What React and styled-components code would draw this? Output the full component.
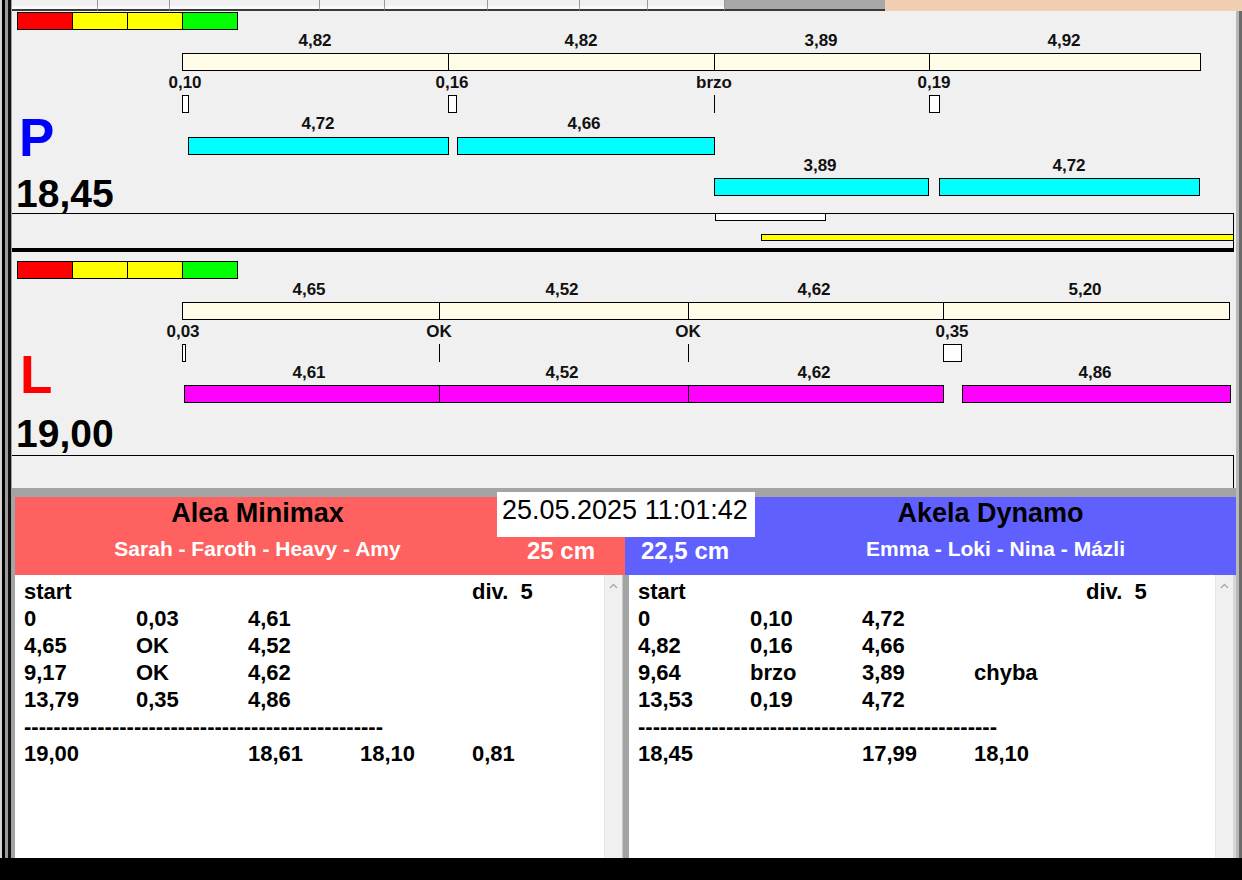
import styled, { createGlobalStyle } from "styled-components";

const GlobalStyle = createGlobalStyle`
  html, body {
    margin: 0;
    padding: 0;
    background: #000;
  }
  body {
    font-family: "Liberation Sans", Arial, sans-serif;
  }
`;

const FONT = `"Liberation Sans", Arial, sans-serif`;

// chart rows, x in px from the start of the chart column
const panels = {
  P: {
    letter: "P",
    color: "#0000ff",
    score: "18,45",
    legendGap: 1,
    letterLeft: 7,
    letterGap: 11,
    scoreGap: 0,
    footer: 35,
    rows: [
      { kind: "labels", h: 23, top: 2, items: [[133, "4,82"], [399, "4,82"], [639, "3,89"], [882, "4,92"]] },
      { kind: "bar", h: 18, color: "#fffce8", segs: [[0, 266], [266, 532], [532, 747], [747, 1018]] },
      { kind: "labels", h: 24, top: 3, items: [[3, "0,10"], [270, "0,16"], [532, "brzo"], [752, "0,19"]] },
      { kind: "bar", h: 18, color: "#ffffff", segs: [[0, 6], [266, 274], [532, 532], [747, 757]] },
      { kind: "labels", h: 24, top: 2, items: [[136, "4,72"], [402, "4,66"]] },
      { kind: "bar", h: 18, color: "#00ffff", segs: [[6, 266], [275, 532]] },
      { kind: "labels", h: 23, top: 2, items: [[638, "3,89"], [887, "4,72"]] },
      { kind: "bar", h: 18, color: "#00ffff", segs: [[532, 746], [757, 1017]] },
      { kind: "space", h: 17 },
    ],
  },
  L: {
    letter: "L",
    color: "#ff0000",
    score: "19,00",
    legendGap: 9,
    letterLeft: 8,
    letterGap: 14,
    scoreGap: 2,
    footer: 33,
    rows: [
      { kind: "labels", h: 23, top: 2, items: [[127, "4,65"], [380, "4,52"], [632, "4,62"], [903, "5,20"]] },
      { kind: "bar", h: 18, color: "#fffce8", segs: [[0, 257], [257, 506], [506, 761], [761, 1047]] },
      { kind: "labels", h: 24, top: 3, items: [[1, "0,03"], [257, "OK"], [506, "OK"], [770, "0,35"]] },
      { kind: "bar", h: 18, color: "#ffffff", segs: [[0, 3], [257, 257], [506, 506], [761, 779]] },
      { kind: "labels", h: 23, top: 2, items: [[127, "4,61"], [380, "4,52"], [632, "4,62"], [913, "4,86"]] },
      { kind: "bar", h: 18, color: "#ff00ff", segs: [[2, 257], [257, 506], [506, 761], [780, 1048]] },
      { kind: "space", h: 52 },
    ],
  },
};

const dashes = "-".repeat(49);

const teams = [
  {
    name: "Alea Minimax",
    dogs: "Sarah - Faroth - Heavy - Amy",
    height: "25 cm",
    color: "#ff6060",
    rows: [
      ["start", "", "", "", "div.\u00a0\u00a05"],
      ["0", "0,03", "4,61"],
      ["4,65", "OK", "4,52"],
      ["9,17", "OK", "4,62"],
      ["13,79", "0,35", "4,86"],
      [dashes],
      ["19,00", "", "18,61", "18,10", "0,81"],
    ],
  },
  {
    name: "Akela Dynamo",
    dogs: "Emma - Loki - Nina - Mázli",
    height: "22,5 cm",
    color: "#6060ff",
    rows: [
      ["start", "", "", "", "div.\u00a0\u00a05"],
      ["0", "0,10", "4,72"],
      ["4,82", "0,16", "4,66"],
      ["9,64", "brzo", "3,89", "chyba"],
      ["13,53", "0,19", "4,72"],
      [dashes],
      ["18,45", "", "17,99", "18,10"],
    ],
  },
];

const tabs = [86, 72, 150, 65, 103, 92, 68, 77];

function Legend({ gap }) {
  return (
    <LegendRow $gap={gap}>
      {["#ff0000", "#ffff00", "#ffff00", "#00ff00"].map((c, i) => (
        <LegendBox key={i} $color={c} />
      ))}
    </LegendRow>
  );
}

function ChartRow({ row }) {
  if (row.kind === "labels") {
    return (
      <Track $h={row.h}>
        {row.items.map(([x, t], i) => (
          <Label key={i} $top={row.top} style={{ left: x }}>
            {t}
          </Label>
        ))}
      </Track>
    );
  }
  if (row.kind === "bar") {
    return (
      <Track $h={row.h}>
        {row.segs.map(([a, b], i) =>
          a === b ? (
            <Tick key={i} style={{ left: a }} />
          ) : (
            <Seg key={i} $color={row.color} style={{ left: a, width: b - a + 1 }} />
          )
        )}
      </Track>
    );
  }
  return <Track $h={row.h} />;
}

function Lane({ data, children }) {
  return (
    <LanePanel>
      <Legend gap={data.legendGap} />
      <LaneBody>
        <Side>
          <Letter $color={data.color} $left={data.letterLeft} $gap={data.letterGap}>
            {data.letter}
          </Letter>
          <Score $gap={data.scoreGap}>{data.score}</Score>
        </Side>
        <Chart>
          {data.rows.map((r, i) => (
            <ChartRow key={i} row={r} />
          ))}
        </Chart>
      </LaneBody>
      <LaneFooter $h={data.footer}>{children}</LaneFooter>
    </LanePanel>
  );
}

function TeamHeader({ team, flip }) {
  return (
    <Header $color={team.color} $flip={flip}>
      <TeamName $flip={flip} $shift={flip ? 10 : 0}>{team.name}</TeamName>
      <Dogs $flip={flip}>{team.dogs}</Dogs>
      <Height $flip={flip}>{team.height}</Height>
    </Header>
  );
}

function ResultList({ team, edge }) {
  return (
    <ListFrame $edge={edge}>
      <ListBody>
        {team.rows.map((r, i) =>
          r.length === 1 ? (
            <ListRow key={i}>
              <Dashes>{r[0]}</Dashes>
            </ListRow>
          ) : (
            <ListRow key={i}>
              {[0, 1, 2, 3, 4].map((c) => (
                <Cell key={c}>{r[c] || ""}</Cell>
              ))}
            </ListRow>
          )
        )}
      </ListBody>
      <ScrollTrack>
        <svg width="9" height="6" viewBox="0 0 9 6">
          <path d="M1 5 L4.5 1.5 L8 5" fill="none" stroke="#a8a8a8" strokeWidth="1.3" />
        </svg>
      </ScrollTrack>
    </ListFrame>
  );
}

export default function App() {
  return (
    <>
      <GlobalStyle />
      <Page>
        <Window>
          <LeftFrame />
          <Column>
            <TabStrip>
              {tabs.map((w, i) => (
                <Tab key={i} $w={w} />
              ))}
              <TabGray />
              <TabPeach />
            </TabStrip>
            <Inner>
              <Content>
                <Lane data={panels.P}>
                  <StartMark />
                  <TimeBar />
                </Lane>
                <Divider />
                <Lane data={panels.L} />
                <GrayBand />
                <Results>
                  <DateBox>25.05.2025 11:01:42</DateBox>
                  <Headers>
                    <TeamHeader team={teams[0]} />
                    <TeamHeader team={teams[1]} flip />
                  </Headers>
                  <Lists>
                    <ResultList team={teams[0]} />
                    <ListDivider />
                    <ResultList team={teams[1]} edge />
                  </Lists>
                </Results>
              </Content>
              <RightFrame />
            </Inner>
          </Column>
        </Window>
        <BottomBar />
      </Page>
    </>
  );
}

const Page = styled.div`
  width: 1242px;
  height: 880px;
  display: flex;
  flex-direction: column;
  overflow: hidden;
  background: #f0f0f0;
  font-family: ${FONT};
`;

const Window = styled.div`
  display: flex;
  height: 858px;
`;

const LeftFrame = styled.div`
  width: 12px;
  flex-shrink: 0;
  background: linear-gradient(
    90deg,
    #d4d4d4 0 2px,
    #000 2px 5px,
    #9c9c9c 5px 8px,
    #111 8px 11px,
    #a0a0a0 11px 12px
  );
`;

const Column = styled.div`
  flex: 1;
  display: flex;
  flex-direction: column;
`;

const TabStrip = styled.div`
  display: flex;
  height: 11px;
  flex-shrink: 0;
`;

const Tab = styled.div`
  width: ${(p) => p.$w}px;
  box-sizing: border-box;
  background: #f0f0f0;
  border-right: 1px solid #9a9a9a;
  border-bottom: 2px solid #3a3a3a;
  box-shadow: inset 0 -3px 0 #fafafa;
`;

const TabGray = styled.div`
  width: 160px;
  box-sizing: border-box;
  background: #a8a8a8;
  border-bottom: 2px solid #3a3a3a;
`;

const TabPeach = styled.div`
  flex: 1;
  background: #efceb2;
`;

const Inner = styled.div`
  flex: 1;
  display: flex;
`;

const Content = styled.div`
  width: 1224px;
  display: flex;
  flex-direction: column;
`;

const RightFrame = styled.div`
  flex: 1;
  background: linear-gradient(90deg, #b8b8b8 0 3px, #6a6a6a 3px 6px);
`;

const LanePanel = styled.section`
  display: flex;
  flex-direction: column;
  background: #f0f0f0;
`;

const LegendRow = styled.div`
  display: flex;
  margin: ${(p) => p.$gap}px 0 0 5px;
  height: 18px;
`;

const LegendBox = styled.div`
  width: 56px;
  height: 18px;
  box-sizing: border-box;
  border: 1px solid #000;
  background: ${(p) => p.$color};
  & + & {
    margin-left: -1px;
  }
`;

const LaneBody = styled.div`
  display: flex;
`;

const Side = styled.div`
  width: 170px;
  flex-shrink: 0;
  display: flex;
  flex-direction: column;
  justify-content: flex-end;
`;

const Letter = styled.div`
  font: bold 53px/53px ${FONT};
  color: ${(p) => p.$color};
  margin: 0 0 ${(p) => p.$gap}px ${(p) => p.$left}px;
`;

const Score = styled.div`
  font: bold 39px/38px ${FONT};
  color: #000;
  margin: 0 0 ${(p) => p.$gap}px 4px;
`;

const Chart = styled.div`
  flex: 1;
  display: flex;
  flex-direction: column;
`;

const Track = styled.div`
  position: relative;
  height: ${(p) => p.$h}px;
`;

const Label = styled.span`
  position: absolute;
  top: ${(p) => p.$top}px;
  transform: translateX(-50%);
  font: bold 17px/17px ${FONT};
  color: #111;
  white-space: nowrap;
`;

const Seg = styled.div`
  position: absolute;
  top: 0;
  bottom: 0;
  box-sizing: border-box;
  border: 1px solid #000;
  background: ${(p) => p.$color};
`;

const Tick = styled.div`
  position: absolute;
  top: 0;
  bottom: 0;
  width: 1px;
  background: #000;
`;

const LaneFooter = styled.div`
  position: relative;
  height: ${(p) => p.$h}px;
  box-sizing: border-box;
  margin-right: 2px;
  border-top: 1px solid #000;
  border-right: 1px solid #000;
`;

const StartMark = styled.div`
  position: absolute;
  top: -1px;
  left: 703px;
  width: 111px;
  height: 8px;
  box-sizing: border-box;
  background: #fff;
  border: 1px solid #000;
`;

const TimeBar = styled.div`
  position: absolute;
  top: 20px;
  left: 749px;
  right: -1px;
  height: 7px;
  box-sizing: border-box;
  background: #ffff00;
  border: 1px solid #000;
`;

const Divider = styled.div`
  height: 4px;
  margin-right: 2px;
  background: #000;
`;

const GrayBand = styled.div`
  height: 9px;
  background: #a4a4a4;
`;

const Results = styled.section`
  position: relative;
  flex: 1;
  display: flex;
  flex-direction: column;
  border-left: 3px solid #a4a4a4;
  background: #fff;
`;

const DateBox = styled.div`
  position: absolute;
  top: -5px;
  left: 482px;
  width: 258px;
  height: 45px;
  box-sizing: border-box;
  padding: 5px 0 0 5px;
  background: #fff;
  font: 27px/26px ${FONT};
  color: #000;
  white-space: nowrap;
  z-index: 1;
`;

const Headers = styled.div`
  display: grid;
  grid-template-columns: 610px 1fr;
  height: 78px;
`;

const Header = styled.div`
  display: grid;
  grid-template-columns: ${(p) => (p.$flip ? "130px 1fr" : "485px 1fr")};
  grid-template-rows: 40px 38px;
  background: ${(p) => p.$color};
`;

const TeamName = styled.div`
  grid-row: 1;
  grid-column: ${(p) => (p.$flip ? 2 : 1)};
  padding: 3px ${(p) => p.$shift}px 0 0;
  text-align: center;
  font: bold 27px/27px ${FONT};
  color: #000;
`;

const Dogs = styled.div`
  grid-row: 2;
  grid-column: ${(p) => (p.$flip ? 2 : 1)};
  padding-top: 1px;
  text-align: center;
  font: bold 21px/21px ${FONT};
  color: #fff;
`;

const Height = styled.div`
  grid-row: 2;
  grid-column: ${(p) => (p.$flip ? 1 : 2)};
  padding: 2px 0 0 ${(p) => (p.$flip ? 16 : 27)}px;
  font: bold 24px/24px ${FONT};
  color: #fff;
`;

const Lists = styled.div`
  flex: 1;
  display: grid;
  grid-template-columns: 607px 7px 1fr;
`;

const ListFrame = styled.div`
  display: flex;
  border-right: ${(p) => (p.$edge ? "3px solid #d6d6d6" : "none")};
`;

const ListBody = styled.div`
  flex: 1;
  background: #fff;
  padding: 3px 0 0 9px;
`;

const ListRow = styled.div`
  display: grid;
  grid-template-columns: repeat(5, 112px);
  height: 27px;
  font: bold 22px/27px ${FONT};
  color: #000;
`;

const Cell = styled.div`
  white-space: nowrap;
`;

const Dashes = styled.div`
  grid-column: 1 / -1;
  white-space: nowrap;
`;

const ScrollTrack = styled.div`
  width: 17px;
  background: #f0f0f0;
  border-left: 1px solid #e6e6e6;
  display: flex;
  justify-content: center;
  padding-top: 8px;
  align-items: flex-start;
`;

const ListDivider = styled.div`
  background: #a4a4a4;
  border-left: 1px solid #c8c8c8;
`;

const BottomBar = styled.div`
  height: 22px;
  background: #000;
`;
